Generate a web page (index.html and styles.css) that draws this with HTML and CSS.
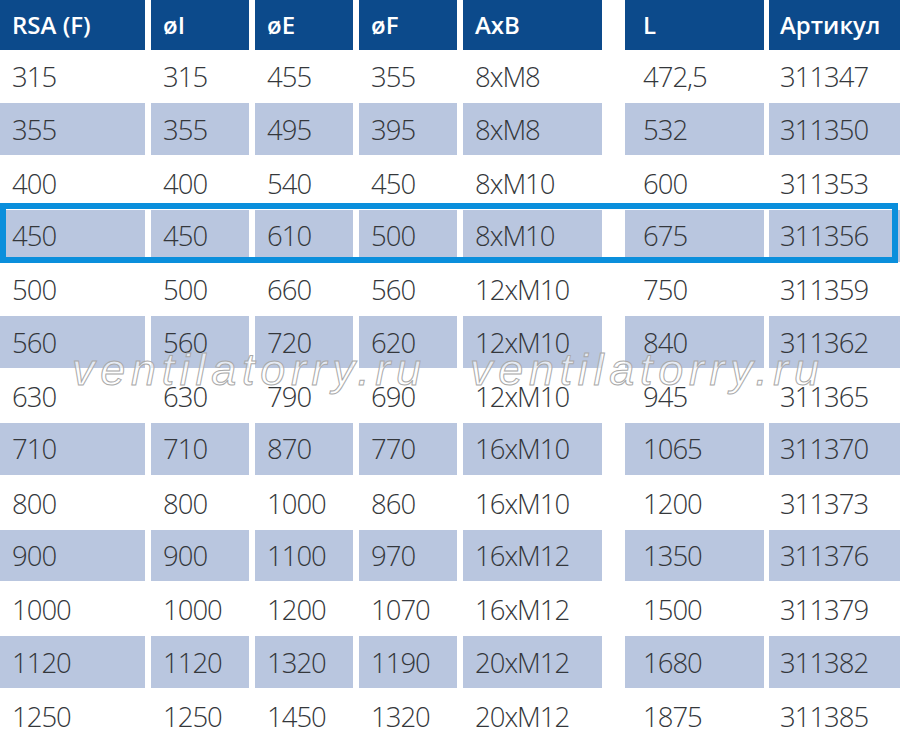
FILE: index.html
```html
<!DOCTYPE html>
<html lang="ru">
<head>
<meta charset="utf-8">
<title>RSA (F)</title>
<link rel="stylesheet" href="styles.css">
</head>
<body>
<div class="sheet">
  <div class="row head">
    <div class="c">RSA (F)</div><div class="c">øI</div><div class="c">øE</div><div class="c">øF</div><div class="c">AxB</div><div class="c">L</div><div class="c">Артикул</div>
  </div>
  <div class="row"><div class="c">315</div><div class="c">315</div><div class="c">455</div><div class="c">355</div><div class="c">8xM8</div><div class="c">472,5</div><div class="c">311347</div></div>
  <div class="row alt"><div class="c">355</div><div class="c">355</div><div class="c">495</div><div class="c">395</div><div class="c">8xM8</div><div class="c">532</div><div class="c">311350</div></div>
  <div class="row"><div class="c">400</div><div class="c">400</div><div class="c">540</div><div class="c">450</div><div class="c">8xM10</div><div class="c">600</div><div class="c">311353</div></div>
  <div class="row alt selected"><div class="c">450</div><div class="c">450</div><div class="c">610</div><div class="c">500</div><div class="c">8xM10</div><div class="c">675</div><div class="c">311356</div></div>
  <div class="row"><div class="c">500</div><div class="c">500</div><div class="c">660</div><div class="c">560</div><div class="c">12xM10</div><div class="c">750</div><div class="c">311359</div></div>
  <div class="row alt"><div class="c">560</div><div class="c">560</div><div class="c">720</div><div class="c">620</div><div class="c">12xM10</div><div class="c">840</div><div class="c">311362</div></div>
  <div class="row"><div class="c">630</div><div class="c">630</div><div class="c">790</div><div class="c">690</div><div class="c">12xM10</div><div class="c">945</div><div class="c">311365</div></div>
  <div class="row alt"><div class="c">710</div><div class="c">710</div><div class="c">870</div><div class="c">770</div><div class="c">16xM10</div><div class="c">1065</div><div class="c">311370</div></div>
  <div class="row"><div class="c">800</div><div class="c">800</div><div class="c">1000</div><div class="c">860</div><div class="c">16xM10</div><div class="c">1200</div><div class="c">311373</div></div>
  <div class="row alt"><div class="c">900</div><div class="c">900</div><div class="c">1100</div><div class="c">970</div><div class="c">16xM12</div><div class="c">1350</div><div class="c">311376</div></div>
  <div class="row"><div class="c">1000</div><div class="c">1000</div><div class="c">1200</div><div class="c">1070</div><div class="c">16xM12</div><div class="c">1500</div><div class="c">311379</div></div>
  <div class="row alt"><div class="c">1120</div><div class="c">1120</div><div class="c">1320</div><div class="c">1190</div><div class="c">20xM12</div><div class="c">1680</div><div class="c">311382</div></div>
  <div class="row"><div class="c">1250</div><div class="c">1250</div><div class="c">1450</div><div class="c">1320</div><div class="c">20xM12</div><div class="c">1875</div><div class="c">311385</div></div>

  <div class="watermark wm-left">ventilatorry.ru</div>
  <div class="watermark wm-right">ventilatorry.ru</div>
</div>
</body>
</html>
```

FILE: styles.css
```css
html, body {
  margin: 0;
  padding: 0;
  background: #ffffff;
}

.sheet {
  position: relative;
  width: 900px;
  height: 743px;
  overflow: hidden;
  font-family: "Open Sans", "DejaVu Sans", sans-serif;
  color: #34373b;
}

.row {
  display: grid;
  grid-template-columns: 151px 104px 104px 104px 162px 144px 131px;
  height: 53.3px;
}

.c {
  display: flex;
  align-items: center;
  padding-left: 12px;
  margin-right: 6px;
  font-size: 27.5px;
  font-weight: 300;
  letter-spacing: -1px;
  white-space: nowrap;
}

.c:nth-child(5) { margin-right: 23px; }
.c:nth-child(6) { margin-right: 5px; padding-left: 18px; }
.c:nth-child(7) { margin-right: 0; padding-left: 11px; }

.head {
  height: 50px;
}

.head .c {
  background: #0c4a8b;
  color: #ffffff;
  font-size: 24px;
  font-weight: 600;
  letter-spacing: 0;
  padding-bottom: 2px;
}

.alt .c {
  background: #b9c6df;
  margin-bottom: 1.5px;
}

.selected {
  position: relative;
}

.selected::after {
  content: "";
  position: absolute;
  top: -7px;
  left: 0;
  right: 2px;
  bottom: 0;
  border: 6.5px solid #0a8fdc;
  pointer-events: none;
}

.watermark {
  position: absolute;
  top: 347px;
  font-family: "Liberation Sans", Arial, sans-serif;
  font-style: italic;
  font-size: 45px;
  line-height: 1;
  letter-spacing: 5.7px;
  color: rgba(255, 255, 255, 0.65);
  -webkit-text-stroke: 1px #a9a9a9;
  white-space: nowrap;
  pointer-events: none;
}

.wm-left { left: 72px; }
.wm-right { left: 470px; }
```
